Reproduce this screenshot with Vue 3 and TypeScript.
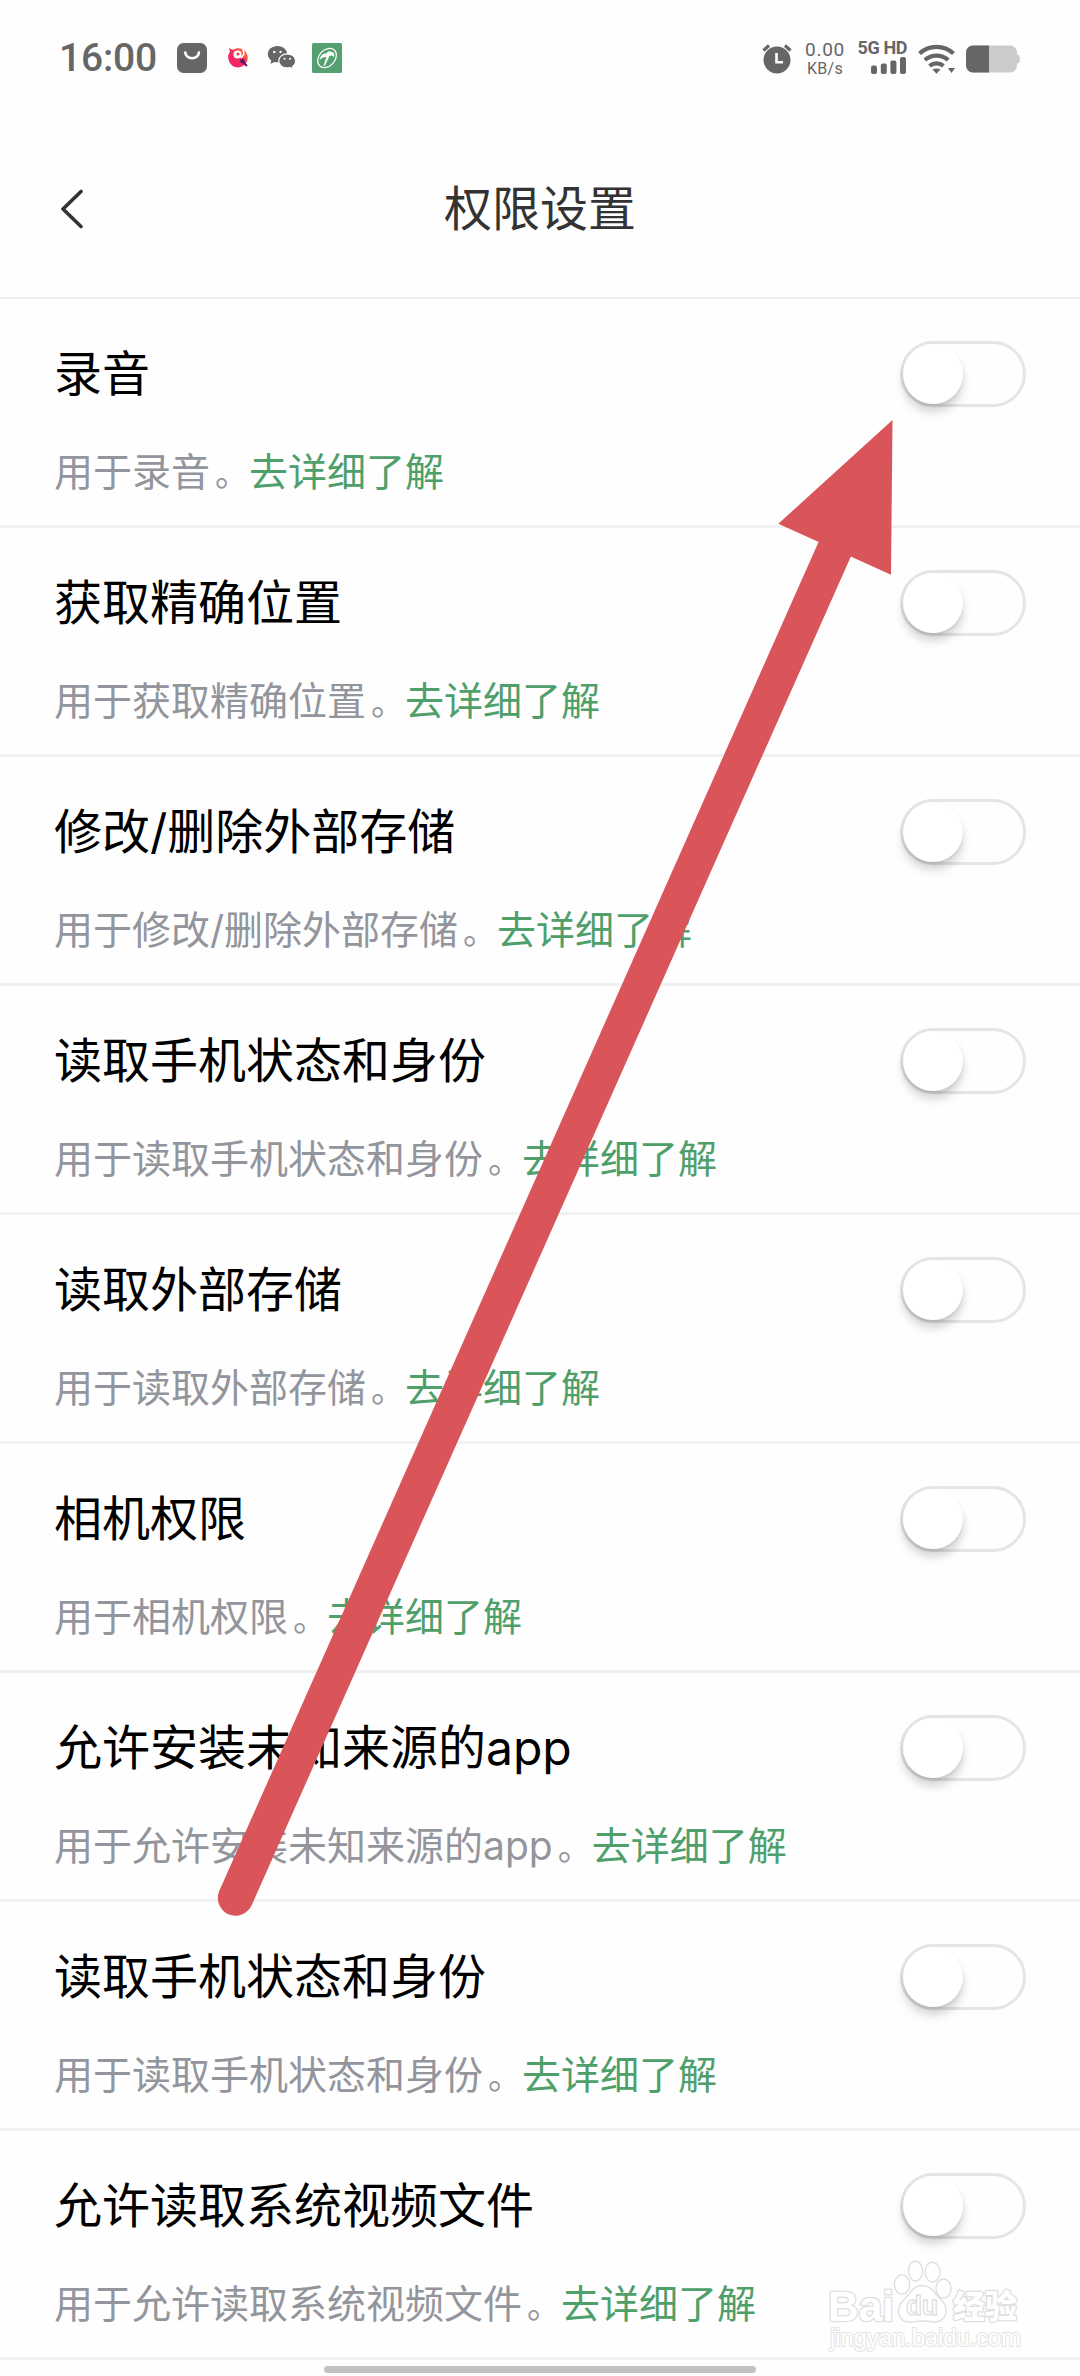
<script setup lang="ts">
interface Permission {
  name: string
  enabled: boolean
}

const permissions: Permission[] = [
  { name: '录音', enabled: false },
  { name: '获取精确位置', enabled: false },
  { name: '修改/删除外部存储', enabled: false },
  { name: '读取手机状态和身份', enabled: false },
  { name: '读取外部存储', enabled: false },
  { name: '相机权限', enabled: false },
  { name: '允许安装未知来源的app', enabled: false },
  { name: '读取手机状态和身份', enabled: false },
  { name: '允许读取系统视频文件', enabled: false },
]
</script>

<template>
  <main class="screen">
    <header class="status">
      <div class="status-left">
        <span class="clock">16:00</span>
        <svg class="ico bag" width="30" height="30" viewBox="0 0 30 30">
          <rect width="30" height="30" rx="6.5" fill="#666" />
          <path d="M8.3 9.5a6.8 5.8 0 0 0 13.6 0" fill="none" stroke="#fff" stroke-width="2.6" stroke-linecap="round" />
        </svg>
        <svg class="ico fish" width="24" height="24" viewBox="0 0 24 24">
          <defs>
            <linearGradient id="fishFill" x1="0" y1="1" x2="1" y2="0">
              <stop offset="0" stop-color="#f0208a" />
              <stop offset=".5" stop-color="#f52a55" />
              <stop offset="1" stop-color="#fb8a3c" />
            </linearGradient>
          </defs>
          <path d="M3 2l4 2c4-3 10-2 13 2 3 5 2 11-3 14s-12 1-14-5C1 10 3 7 4 6z" fill="url(#fishFill)" />
          <circle cx="11.5" cy="8.5" r="4" fill="#fff" />
          <circle cx="12" cy="8" r="1.5" fill="#e33a4a" />
          <path d="M17 3l1 5-3 4" fill="none" stroke="#fff" stroke-width="1.5" />
          <circle cx="16.5" cy="15" r="2.3" fill="#5a1470" />
          <path d="M17 16l4 4" stroke="#5a1470" stroke-width="2" />
        </svg>
        <svg class="ico wechat" width="30" height="26" viewBox="0 0 30 26">
          <path d="M10.500 1C4.900 1 .8 4.600.8 9.200c0 2.600 1.400 4.800 3.500 6.300L3.400 19l3.900-2.100c1 .3 2.100.4 3.200.4 5.600 0 9.700-3.600 9.700-8.100S16.100 1 10.500 1z" fill="#666" />
          <path d="M20.200 8.900c-4.700 0-8.500 3-8.500 7s3.800 7 8.500 7c1 0 2-.1 2.900-.4l3.400 1.900-.8-3c1.800-1.300 3-3.200 3-5.500 0-4-3.800-7-8.500-7z" fill="#666" stroke="#fff" stroke-width="1.200" />
          <g fill="#fff"><circle cx="7.300" cy="6.900" r="1.200" /><circle cx="13.500" cy="6.900" r="1.200" /><circle cx="17.500" cy="13.700" r="1" /><circle cx="23" cy="13.700" r="1" /></g>
        </svg>
        <svg class="ico leaf" width="30" height="30" viewBox="0 0 30 30">
          <rect width="30" height="30" rx="1.500" fill="#55a070" />
          <ellipse cx="15" cy="15" rx="10.800" ry="8" transform="rotate(-48 15 15)" fill="none" stroke="#fff" stroke-width="1.200" />
          <path d="M7.500 17c1-4.500 3.500-7 7-6.500 1-2.500 3-3 5-1.500 2.500.2 3.300 2 2.500 5-1.500-1.800-3-2-4.500-1l-4.500 9.500h-1.500l3-8.500c-2.500-.2-5 .800-7 3z" fill="#fff" />
        </svg>
      </div>
      <div class="status-right">
        <svg class="alarm" width="30" height="32" viewBox="0 0 30 32">
          <circle cx="15" cy="18" r="13.500" fill="#666" />
          <path d="M1.500 8.500l5.500-5M28.500 8.500l-5.500-5" stroke="#666" stroke-width="3.200" />
          <path d="M14.500 11v9.300h6.500" fill="none" stroke="#fff" stroke-width="2.600" />
        </svg>
        <div class="speed"><span class="rate">0.00</span><span class="unit">KB/s</span></div>
        <div class="cell">
          <span class="net">5G HD</span>
          <svg width="36" height="17" viewBox="0 0 36 17" fill="#666">
            <rect x="0" y="8.500" width="6" height="8.500" rx="2" /><rect x="9.800" y="6.500" width="6" height="10.500" rx="2" />
            <rect x="19.400" y="3.500" width="6" height="13.500" rx="2" /><rect x="29" y="0" width="6" height="17" rx="2" />
          </svg>
        </div>
        <svg class="wifi" width="38" height="30" viewBox="0 0 38 30">
          <g fill="none" stroke="#666" stroke-width="4.200">
            <path d="M1.500 9.500a25 25 0 0 1 34 0" />
            <path d="M6.800 16a18 18 0 0 1 23.400 0" />
            <path d="M11.500 21.800a11.500 11.500 0 0 1 14 0" />
          </g>
          <path d="M14.500 25.500q4-2 8 0L18.500 29.700z" fill="#666" />
          <path d="M30 24h7l-3.500 5z" fill="#666" />
        </svg>
        <svg class="battery" width="54" height="28" viewBox="0 0 54 28">
          <path d="M7 .5h37a7 7 0 0 1 7 7v2q2.700 0 2.700 3v3q0 3-2.700 3v2a7 7 0 0 1-7 7H7a7 7 0 0 1-7-7v-13a7 7 0 0 1 7-7z" fill="#cbcbcb" />
          <path d="M23 .5H7a7 7 0 0 0-7 7v13a7 7 0 0 0 7 7h16z" fill="#666" />
        </svg>
      </div>
    </header>

    <nav class="bar">
      <button class="back" aria-label="返回">
        <svg width="24" height="40" viewBox="0 0 24 40"><path d="M21 2.500L3 20l18 17.500" fill="none" stroke="#333" stroke-width="3.600" stroke-linecap="round" stroke-linejoin="round" /></svg>
      </button>
      <h1>权限设置</h1>
    </nav>

    <ul class="list">
      <li v-for="(item, i) in permissions" :key="i" class="item">
        <div class="top">
          <h2>{{ item.name }}</h2>
          <span class="switch" role="switch" :aria-checked="item.enabled"><span class="knob"></span></span>
        </div>
        <p>用于{{ item.name }}<span class="stop">。</span><a>去详细了解</a></p>
      </li>
    </ul>
    <div class="home"></div>

    <svg class="arrow" width="1080" height="2376" viewBox="0 0 1080 2376">
      <path d="M235.500 1898L834.700 549.200" stroke="#da555a" stroke-width="35.400" stroke-linecap="round" />
      <path d="M892.500 420L778.300 523.800L891 574.800z" fill="#da555a" />
    </svg>

    <svg class="mark" width="230" height="104" viewBox="0 0 230 104">
      <g fill="#fff" stroke="#dfdfdf" stroke-width="1.400">
        <g paint-order="stroke" stroke-linejoin="round">
          <text x="8" y="61" class="latin" stroke-width="2.600" font-size="43" textLength="66" lengthAdjust="spacingAndGlyphs">Bai</text>
          <text x="133" y="58" class="han" stroke-width="2.600" font-size="32">经验</text>
          <text x="10" y="86" class="url" stroke="#e4e4e4" stroke-width="2" font-size="23" textLength="191" lengthAdjust="spacingAndGlyphs">jingyan.baidu.com</text>
        </g>
        <ellipse cx="82" cy="24.500" rx="7.600" ry="9.700" /><ellipse cx="95.500" cy="11" rx="7" ry="10" />
        <ellipse cx="112.500" cy="12" rx="7.600" ry="9.700" /><ellipse cx="123.500" cy="28.500" rx="7.600" ry="9.500" />
        <path d="M102 25.500c8 0 11 5 15 10 5 5 10 9 9 16-1 8-7 11-13 10.500-4-.6-7-1-11-1s-7 .6-11 1c-7 .4-12-3-12.500-10.500-.3-7 4-10 9-15.500 4-5 7-10.500 14.500-10.500z" />
        <text x="86" y="55" class="du" font-size="27" textLength="32" lengthAdjust="spacingAndGlyphs">du</text>
      </g>
    </svg>
  </main>
</template>

<style>
body { margin: 0; background: #fff; }
</style>

<style scoped>
.screen {
  position: relative;
  width: 1080px;
  height: 2376px;
  overflow: hidden;
  background: #fefefe;
  font-family: Inter, "Noto Sans CJK SC", sans-serif;
}
.status {
  display: flex;
  justify-content: space-between;
  height: 118px;
  box-sizing: border-box;
  padding: 0 60px 0 59px;
  color: #666;
  font-family: Roboto, sans-serif;
}
.status-left, .status-right { display: flex; align-items: center; height: 116px; }
.status-right { align-items: flex-start; }
.clock { width: 118px; font-size: 39px; font-weight: 500; line-height: 40px; letter-spacing: -0.2px; }
.fish { margin-left: 19px; }
.wechat { margin-left: 17px; }
.leaf { margin-left: 15px; }
.alarm { margin: 42px 12px 0 0; }
.speed { display: flex; flex-direction: column; align-items: center; width: 42px; margin-top: 39px; }
.rate { font-size: 19px; line-height: 22px; letter-spacing: .7px; }
.unit { font-size: 16px; line-height: 17px; margin-top: -1px; letter-spacing: .3px; }
.cell { display: flex; flex-direction: column; align-items: flex-end; width: 50px; margin: 39px 0 0 11px; }
.net { font-size: 18px; font-weight: 700; line-height: 18px; white-space: nowrap; letter-spacing: -.4px; }
.wifi { margin: 44px 0 0 11px; }
.battery { margin: 45px 0 0 10px; }
.bar {
  display: grid;
  grid-template-columns: 140px 1fr 140px;
  align-items: center;
  height: 181px;
  box-sizing: border-box;
  border-bottom: 2px solid #f0f0f0;
}
.back { display: flex; margin: 2px 0 0 60px; padding: 0; border: 0; background: none; }
h1, h2, p { margin: 0; font-weight: 400; }
h1 { margin-top: 2px; font-size: 48px; line-height: 70px; color: #333; text-align: center; }
.list { list-style: none; margin: 0; padding: 0; }
.item { height: 229px; box-sizing: border-box; padding: 40px 54px 0; border-bottom: 3px solid #f1f1f1; }
.top { display: flex; justify-content: space-between; align-items: center; height: 70px; }
h2 { font-size: 48px; line-height: 70px; color: #000; }
p { margin-top: 35px; font-size: 39px; line-height: 56px; color: #93959c; }
.stop { padding-left: 5px; font-size: 34px; line-height: 40px; }
a { color: #4f9f6b; }
.switch { width: 126px; height: 66px; box-sizing: border-box; border: 3px solid #e5e5e5; border-radius: 33px; }
.knob { display: block; width: 60px; height: 60px; border-radius: 50%; background: #fff; box-shadow: 0 8px 10px rgba(0, 0, 0, .17), 0 2px 3px rgba(0, 0, 0, .07); }
.home { width: 432px; height: 7px; margin: 6px auto 0; border-radius: 4px; background: #c2c2c2; }
.arrow { position: absolute; inset: 0; }
.mark { position: absolute; left: 820px; top: 2260px; overflow: visible; }
.latin, .du { font-family: "Liberation Sans", sans-serif; font-weight: 700; }
.han { font-family: "Noto Sans CJK SC", sans-serif; font-weight: 900; }
.url { font-family: "Liberation Sans", sans-serif; }
</style>
